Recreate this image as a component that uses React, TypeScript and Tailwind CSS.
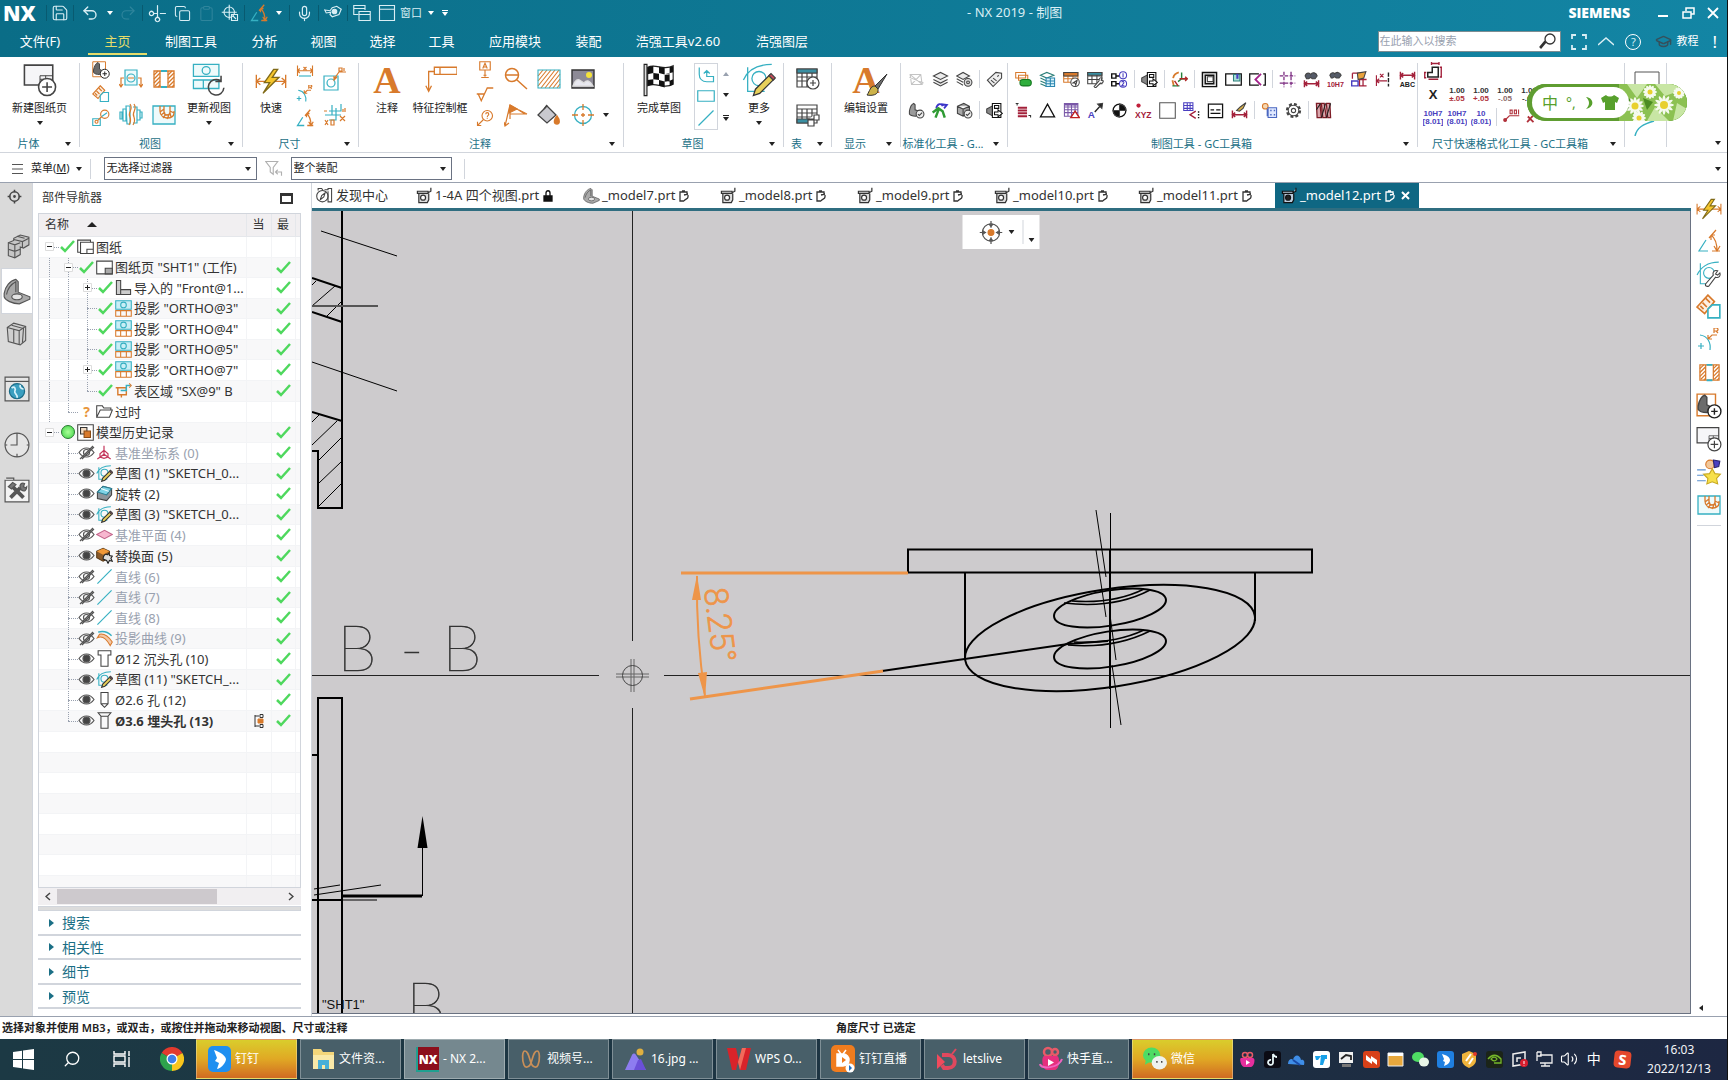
import type { ReactNode } from "react";
import clsx from "clsx";
import {
  Clipboard,
  Copy,
  GraduationCap,
  Mic,
  Save,
  Scissors,
  Search,
  Undo2,
  Redo2,
  Volume2,
} from "lucide-react";

const O = "#d87a2c";
const T = "#36b0c2";
const K = "#444444";
const R = "#a3203a";
const B = "#4a3fc0";

type SvgProps = { size?: number; children: ReactNode; stroke?: string; sw?: number };

function Svg({ size = 24, children, stroke = K, sw = 1.5 }: SvgProps) {
  return (
    <svg width={size} height={size} viewBox="0 0 24 24" fill="none" stroke={stroke} strokeWidth={sw} className="shrink-0">
      {children}
    </svg>
  );
}

function Caret({ className = "text-[#222]" }: { className?: string }) {
  return (
    <svg width="6" height="4" viewBox="0 0 6 4" className={clsx("shrink-0", className)}>
      <path d="M0 0h6L3 4z" fill="currentColor" />
    </svg>
  );
}

/* ---------- shared icons ---------- */

const NewSheet = ({ size = 34 }: { size?: number }) => (
  <Svg size={size} sw={1.1}>
    <path d="M1 1.500h20v14H1z" fill="#f6f6f8" />
    <path d="M12 15v-6h9M12 11.500h9M16 9v3" strokeWidth={0.7} />
    <circle cx="17" cy="17" r="6" fill="#fff" />
    <path d="M17 13.500v7M13.500 17h7" />
  </Svg>
);

const BaseView = ({ size = 18 }: { size?: number }) => (
  <Svg size={size} sw={1.3}>
    <path d="M1 1h17v20H1z" stroke={O} />
    <path d="M2 12C3 7 5 3 8 2l2 2v7l6 3-6 4c-4 0-7-1-8-3z" fill="#6b6b6b" stroke="#444" />
    <circle cx="17" cy="17" r="6" fill="#fff" stroke="#222" />
    <path d="M17 14v6M14 17h6" stroke="#222" />
  </Svg>
);

const EditSection = ({ size = 18 }: { size?: number }) => (
  <Svg size={size}>
    <path d="M11 1 17 7 8 18 1 12z" stroke={O} fill="#fdf0e4" />
    <path d="m9 4 4 4M6 8l4 4M4 11l3 3" stroke={O} />
    <path d="M11 22V14l4-4h7v12z" stroke={T} fill="#fff" />
  </Svg>
);

const DetailView = () => (
  <Svg size={18}>
    <path d="M1 13h10v9H1z" stroke={T} />
    <path d="m8 15 5-5" stroke={O} />
    <circle cx="17" cy="7" r="5.500" stroke={O} />
    <circle cx="6" cy="17" r="2" stroke={O} />
    <path d="m13 10 7-5" stroke={T} />
  </Svg>
);

const SectionLine = () => (
  <Svg sw={1.2}>
    <path d="M6 3h12v15H6z" stroke={T} fill="#eefafb" />
    <circle cx="12" cy="11" r="4" stroke={T} />
    <path d="M2 20v-9h3m14 0h3v9M0 17l2 3 2-3m16 0 2 3 2-3M9 11h6" stroke={O} />
  </Svg>
);

const HalfSection = ({ size = 24 }: { size?: number }) => (
  <Svg size={size} sw={1.3}>
    <path d="M2 4h20v16H2zM8 4v16M16 4v16" stroke={O} />
    <path d="m2 8 4-4M2 12l6-6M2 16l6-6M3 19l5-5M6 20l2-2M16 8l4-4M16 12l6-6M16 16l6-6M17 19l5-5M20 20l2-2" stroke={O} />
    <path d="M9 4h6M9 20h6" stroke={T} strokeWidth={2} />
  </Svg>
);

const BreakView = () => (
  <Svg sw={1.2}>
    <path d="M1 9h2v7H1zM4 6h3v12H4zM7 3h4v18H8zM14 4h4v16h-4M18 7h3v10h-3M21 9h2v6h-2" stroke={T} />
    <path d="M11 1c4 6-3 8 0 13 1 3 1 5-1 8M15 1c4 6-3 8 0 13 1 3 1 5-1 8" stroke={O} />
  </Svg>
);

const BreakOut = ({ size = 24 }: { size?: number }) => (
  <Svg size={size} sw={1.3}>
    <path d="M1 3h22v18H1z" stroke={T} fill="#eefafb" />
    <path d="M8 3v5c0 9 14 9 14 2v-2M12 3v6c0 4 6 4 6 0V3M8 9l4-3M9 12l4-3M11 15l3-4M15 16l2-4M19 14l-1-4M22 10l-4-2" stroke={O} />
  </Svg>
);

const UpdateViews = () => (
  <Svg size={34} sw={0.9}>
    <path d="M1 1h18v8.500H1zM1 12h18v6H1zM8 12v6" stroke={T} fill="#eefafb" />
    <circle cx="10" cy="5.300" r="2.800" stroke={T} />
    <path d="M20 12.500a5.500 5.500 0 1 0 2.500 5M20.500 9v4h-4" strokeWidth={1.1} />
  </Svg>
);

const Rapid = ({ size = 32 }: { size?: number }) => (
  <Svg size={size} sw={1}>
    <path d="M1 8v10M23 8v10M1 13h22M4 10.500 1 13l3 2.500M20 10.500 23 13l-3 2.500" stroke={O} />
    <path d="M14 4 7 14h4L6 22l12-12h-5l4-6z" fill="#f6c62d" stroke="#806a18" />
  </Svg>
);

const LinearDim = () => (
  <Svg size={18} stroke={O}>
    <path d="M2 6v14M22 6v14M2 13h20M5 10l-3 3 3 3M19 10l3 3-3 3M10 8l4 4m0-4-4 4" />
    <path d="M4 20h16" stroke={T} />
  </Svg>
);

const RadialDim = ({ size = 18 }: { size?: number }) => (
  <Svg size={size} sw={size > 20 ? 1.2 : 1.5}>
    <path d="M3 7c8 1 11 8 10 15M4 15v6M1 18h6" stroke={T} />
    <path d="m11 11 4-4h5M11 11V7m0 4h4M17 5V0h3l1 1v1l-1 1h-3m2 0 2 2" stroke={O} />
  </Svg>
);

const AngularDim = ({ size = 18 }: { size?: number }) => (
  <Svg size={size} sw={size > 20 ? 1.2 : 1.7}>
    <path d="M9 11 2 22h9" stroke={T} />
    <path d="M14 6c4 3 6 8 6 16M12 9l7-8M15 22h8M14 6v5M14 6h4M17 17l3 5 3-5" stroke={O} />
  </Svg>
);

const HoleCallout = () => (
  <Svg sw={1.2}>
    <path d="M1 9h14v14H1z" stroke={T} />
    <circle cx="8" cy="16" r="4" stroke={T} />
    <path d="m11 12 5-7h7M14 10l-3 3v-4M16 1h3v3h-3zM21 1v3" stroke={O} />
  </Svg>
);

const Ordinate = () => (
  <Svg sw={1.2}>
    <path d="M6 8h12V1M13 5v12H6M9 2v10M2 12h16" stroke={T} />
    <path d="M20 6v3M22 5v4M17 13l5 5m0-5-5 5M2 17l3 5m0-5-3 5M8 17h3v5H8zM1 8h3" stroke={O} />
  </Svg>
);

const Fcf = () => (
  <Svg size={34} stroke={O} sw={0.9}>
    <path d="M4 20V6h4M8 3h16v5H8zM12 3v5M2 16l2 4 2-4" />
  </Svg>
);

const DatumA = () => (
  <Svg size={18} stroke={O}>
    <path d="M5 1h14v11H5zM12 12v9M7 22h10M10 19h4" />
    <path d="m9 10 3-7 3 7M10 8h4" />
  </Svg>
);
const Surface = () => (
  <Svg size={18} stroke={O} sw={1.7}>
    <path d="M1 12h10M3 12l4 9L15 4h8" />
  </Svg>
);
const Balloon = () => (
  <Svg size={18} stroke={O}>
    <circle cx="15" cy="9" r="7" />
    <path d="m10 14-8 8M2 17v5h5M13 7c0-3 4-3 4 0 0 2-2 1-2 4m0 1v1" />
  </Svg>
);
const Magnify = () => (
  <Svg stroke={O}>
    <circle cx="8" cy="8" r="6.500" />
    <path d="M2 8h12M13 13l10 9" />
  </Svg>
);
const FlagNote = () => (
  <Svg stroke={O} sw={1.2}>
    <path d="M1 23 6 2v14M0 19l1 4 4-3M6 11h15L13 6 6 2" />
    <path d="m6 2 7 4-8 4z" fill={O} />
    <path d="m15 7 8 4" />
  </Svg>
);
const Hatch = () => (
  <Svg stroke={O} sw={1.1}>
    <path d="M1 9 6 3M1 14 10 3M1 19 14 3M4 21 18 3M8 21 22 3M12 21l11-14M16 21l7-9M20 21l3-4" />
    <path d="M1 3h22v18H1z" stroke={T} />
  </Svg>
);
const Picture = () => (
  <Svg sw={1.4}>
    <path d="M1 3h22v18H1z" fill="#8d8a96" stroke="#333" />
    <circle cx="18" cy="8" r="3" fill="#f4e23a" stroke="none" />
    <path d="M2 19c2-6 5-8 8-5l3 2c3-4 6-2 9 3z" fill="#e8e8f0" stroke="#ddd" />
  </Svg>
);
const Fill = () => (
  <Svg sw={1.3}>
    <path d="m10 3 9 9-9 8-9-8z" fill="#c9c9cf" />
    <path d="m7 6 3-4" />
    <path d="M20 13c3 4 3 8 0 8s-4-3 0-8z" fill={O} stroke={O} />
  </Svg>
);
const CenterMark = () => (
  <Svg sw={1.3}>
    <circle cx="12" cy="12" r="8.500" stroke={T} />
    <path d="M12 1v6m0 10v6M1 12h6m10 0h6M12 10v4M10 12h4" stroke={O} />
  </Svg>
);

const Checker = () => (
  <Svg size={34} sw={0.8}>
    <path d="M1.500 1h2v22h-2z" fill="#ddd" stroke="#222" />
    <path d="M4 3c6-3 11 3 18-1v13c-7 4-12-2-18 1z" fill="#fff" stroke="#222" />
    <path d="M4 3l4-1v5l-4 1zM12 2.600l4 1v4.500l-4-1zM8 7l4 .5v4.500L8 11.500zM16 8l6-1.500V2.300L19.500 3v4.500M4 12l4-.6v4L4 16zM12 12l4 1v4.300L12 16zM16 8.500v4.700l3.500-.5V8zM19.500 12.500l2.500-1v3.700l-2.500 1z" fill="#111" stroke="none" />
  </Svg>
);
const Profile = () => (
  <Svg size={18} stroke={T} sw={1.6}>
    <path d="M3 2v9c0 6 4 10 10 10h9v-7h-9V6M9 10l4-4 4 4" />
  </Svg>
);
const RectIcon = () => (
  <Svg size={18} stroke={T} sw={1.6}>
    <path d="M1 5h22v14H1z" />
  </Svg>
);
const LineIcon = ({ size = 18 }: { size?: number }) => (
  <Svg size={size} stroke={T} sw={1.6}>
    <path d="M2 22 22 2" />
  </Svg>
);
const Sketch = ({ size = 34 }: { size?: number }) => (
  <Svg size={size} sw={size > 24 ? 0.9 : 1.5}>
    <path d="M4 3v17h12M1 12C4 5 11 1 21 1" stroke={T} />
    <circle cx="12" cy="11" r="5" stroke={T} />
    <path d="m8 23 1.500-4.500L20 8l3 3-10.500 10.500z" fill="#e8d05a" stroke="#333" />
    <path d="m19 9 3 3 1.500-1.500-3-3z" fill="#c8495a" />
  </Svg>
);
const SketchWrench = () => (
  <Svg size={26} sw={1}>
    <path d="M4 2v19h8M1 13C4 6 11 1 21 1" stroke={T} />
    <circle cx="12" cy="11" r="5" stroke={T} />
    <path d="m9 21 7-8c-1-3 1-5 4-4l-2 3 2 1 2-2c1 3-1 5-4 4l-6 8c-2 1-4 0-3-2z" fill="#fff" stroke="#444" />
  </Svg>
);
const TableNew = ({ edit = false }: { edit?: boolean }) => (
  <Svg sw={1.2}>
    <path d="M1 2h20v18H1zM1 6h20M1 10h20M1 14h20M6 6v14M11 6v14M16 6v14" fill="#fff" />
    {edit ? <path d="M1 16h14v4H1z" fill="#3a8fa2" /> : <path d="M1 2h20v4H1z" fill="#3a8fa2" />}
    {edit ? (
      <path d="M12 16h6v-4h5v5h-5v6h-6zM12 16v7M18 12v5h-6" fill="#fff" />
    ) : (
      <>
        <circle cx="17" cy="16" r="6" fill="#fff" />
        <path d="M17 13v6M14 16h6" />
      </>
    )}
  </Svg>
);

/* ---------- GC toolbox icons, drawn on a 24 grid and shown at 17px ---------- */

const gc = (name: string): ReactNode => {
  switch (name) {
    case "attrOff":
      return <path d="M3 5h15l2 14H5zM3 5l17 14M18 5 5 19M2 9l20 8" stroke="#c4c4c4" />;
    case "layers":
      return <path d="m2 7 10-5 10 5-10 5zM2 12l10 5 10-5M2 16l10 5 10-5" fill="#ececec" />;
    case "layerCfg":
      return (
        <>
          <path d="m1 7 9-5 9 5-9 5zM1 11l9 5M1 15l9 5" fill="#ececec" />
          <circle cx="17" cy="16" r="5.500" fill="#ddd" />
          <circle cx="17" cy="16" r="2" />
        </>
      );
    case "tag":
      return <path d="M2 13 14 2l8 1v7L10 22zM18 6l-2 2M7 13l5 4M10 10l5 4" fill="#eee" />;
    case "partCheck":
      return (
        <>
          <path d="M2 13C3 7 5 3 8 2l2 2v7l9 3-8 6c-4 0-8-1-9-3z" fill="#9a9a9a" />
          <circle cx="17" cy="17" r="5.500" fill="#eee" />
          <path d="m14 17 2 2 4-4" />
        </>
      );
    case "greenCheck":
      return (
        <>
          <path d="M6 9C7 2 14 1 15 6M13 3l8 1-4 5" stroke="#3b35c9" strokeWidth={2.500} />
          <path d="m1 15 8-6 6 4 3 9M10 9 5 22" stroke="#2f9b34" strokeWidth={3.500} />
        </>
      );
    case "boxCheck":
      return (
        <>
          <path d="m2 6 9-4 8 4v10l-9 4-8-4zM2 6l8 4 9-4M10 10v10" fill="#a8a8a8" />
          <circle cx="17" cy="17" r="5.500" fill="#eee" />
          <path d="m14 17 2 2 4-4" />
        </>
      );
    case "export":
      return (
        <>
          <path d="m1 10 9-5v15l-9-5z" fill="#888" />
          <path d="M9 2h12v20H9zM12 5h6v4h-6z" fill="#fff" stroke="#111" />
          <path d="M12 14h5v-3l6 5-6 5v-3h-5z" fill="#fff" stroke="#111" />
        </>
      );
    case "replace":
      return (
        <>
          <path d="M1 2h14v8H1zM5 6h13v7H5z" stroke={O} fill="#fff" />
          <rect x="7" y="12" width="16" height="9" rx="4.500" fill="#2fae3c" stroke="#14771f" />
        </>
      );
    case "layerTable":
      return (
        <>
          <path d="m2 6 9-4 10 4-10 4zM2 10l9 4M2 14l9 4M2 18l9 4" stroke="#2c7f79" />
          <path d="M10 10h12v12H10zM10 14h12M10 18h12M16 10v12" fill="#d9f3fb" stroke="#2a86b0" />
        </>
      );
    case "tableSend":
      return (
        <>
          <path d="M1 2h20v14H1zM1 7h20M1 11h20M7 2v14M14 2v14" stroke={O} />
          <path d="M1 2h20v5H1z" fill={O} stroke={K} />
          <circle cx="17" cy="16" r="6" fill="#fff" />
          <path d="m14 17 6-4-2 7-1-3z" />
        </>
      );
    case "tableWrench":
      return (
        <>
          <path d="M1 2h20v16H1zM1 7h20M1 12h20M7 2v16M14 2v16" />
          <path d="M1 2h20v4H1z" fill="#3a8fa2" />
          <path d="m10 22 7-8c0-4 2-5 4-4l-1 3 3 1c0 3-3 4-4 3l-7 7z" fill="#fff" />
        </>
      );
    case "number":
      return (
        <>
          <path d="M1 4h6v6H1zM1 15h6v6H1zM7 7h5M7 18h5" stroke="#111" strokeWidth={2} />
          <circle cx="17" cy="6" r="5" stroke={B} />
          <circle cx="17" cy="18" r="5" stroke={B} />
          <path d="M17 3v6M15 16c1-2 4-1 3 1l-3 4h4" stroke={B} />
        </>
      );
    case "csys":
      return (
        <>
          <path d="M3 10c1-5 4-7 8-8M2 13l2 8" stroke={O} strokeWidth={2.500} />
          <path d="M15 2v9h8M2 21h10M15 11l-5 4" stroke="#24803a" strokeWidth={2} />
          <path d="M12 11h11M5 14l5 7M20 8l3 3-3 3" stroke="#b02626" strokeWidth={2} />
        </>
      );
    case "frame":
      return (
        <>
          <path d="M2 2h20v20H2zM6 6h12v12H6z" fill="#ececec" stroke="#111" strokeWidth={2} />
          <path d="M9 8h8v7H9z" fill="#fff" />
        </>
      );
    case "frameTag":
      return (
        <>
          <path d="M1 4h22v16H1z" stroke="#111" strokeWidth={1.800} />
          <path d="M12 5h9v9h-9z" fill="#a7dfd8" stroke="#2c7f79" />
          <path d="M16 4h3v7h-3z" fill={B} stroke="none" />
        </>
      );
    case "frameCut":
      return (
        <>
          <path d="M14 4H1v16h13M20 4h3v16h-3" stroke="#111" strokeWidth={1.800} />
          <path d="m17 4-8 8 8 8" stroke="#a3208a" strokeWidth={2.500} />
        </>
      );
    case "grid":
      return <path d="M7 1v22M17 1v22M1 7h22M1 17h22" stroke="#7b2a80" strokeDasharray="5 2" strokeWidth={1.800} />;
    case "findDim":
      return (
        <>
          <path d="M3 7c2-6 7-4 8-2 2-4 8-3 9 2l-3 4h-4l-2-2-3 2H5z" fill="#555b68" />
          <path d="M2 13v10M22 13v10M2 18h20M6 15l-4 3 4 3M18 15l4 3-4 3" stroke={R} strokeWidth={2} />
        </>
      );
    case "findTol":
      return (
        <>
          <path d="M4 6c2-5 6-4 7-2 2-3 7-3 9 2l-3 4h-4l-2-2-3 2H6z" fill="#555b68" />
          <text x="0" y="22" fontSize="10" fontWeight="700" fill={R} stroke="none" fontFamily="Liberation Sans">10H7</text>
        </>
      );
    case "handTable":
      return (
        <>
          <path d="M2 3h18M2 3v8M12 3v18h10M12 12h10M17 6v16" stroke={R} strokeWidth={1.800} />
          <path d="M9 3 21 1l-3 9-8 2z" fill="#e9a23c" />
          <path d="M1 14h9v7H1z" stroke={B} strokeWidth={2} />
        </>
      );
    case "dimCut":
      return (
        <>
          <path d="M2 6v15M2 14h15M6 11l-4 3 4 3M7 4l5 5m0-5L7 9" stroke={R} strokeWidth={1.600} />
          <path d="M19 2v20" stroke="#222" strokeWidth={2} strokeDasharray="6 2" />
        </>
      );
    case "dimAbc":
      return (
        <>
          <path d="M2 1v11M22 1v11M2 6h20M6 3 2 6l4 3M18 3l4 3-4 3" stroke={R} strokeWidth={2} />
          <text x="1" y="23" fontSize="10" fontWeight="700" fill="#222" stroke="none" fontFamily="Liberation Sans">ABC</text>
        </>
      );
    case "redLines":
      return (
        <>
          <path d="M4 8h13M4 12h13M4 16h13M4 20h13" stroke={R} strokeWidth={2.800} />
          <path d="M1 2h4M3 2v3M19 19h3v3" stroke="#333" />
        </>
      );
    case "triangle":
      return <path d="M12 3 22 21H2z" stroke="#111" strokeWidth={1.800} />;
    case "tableTri":
      return (
        <>
          <path d="M2 2h19v18H2zM2 7h19M2 11h19M2 15h19M7 2v18M12 2v18M17 2v18" stroke="#7a58a8" />
          <path d="M2 2h19v3H2z" fill="#7a58a8" stroke="none" />
          <path d="m17 13 6 9H11z" stroke="#c02020" fill="#fff" strokeWidth={2} />
        </>
      );
    case "textArrow":
      return (
        <>
          <text x="1" y="22" fontSize="14" fontWeight="700" fill={B} stroke="none" fontFamily="Liberation Sans">A</text>
          <path d="M11 14 21 3" stroke="#222" strokeWidth={2} />
          <path d="m15 3 7-1-1 7z" fill="#222" />
        </>
      );
    case "cog2":
      return (
        <>
          <circle cx="12" cy="12" r="9" fill="#fff" stroke="#111" strokeWidth={1.800} />
          <path d="M12 3v9h9a9 9 0 0 0-9-9zM12 21v-9H3a9 9 0 0 0 9 9z" fill="#111" />
        </>
      );
    case "xyz":
      return (
        <>
          <circle cx="5" cy="5" r="3" fill="#c01f3a" stroke="none" />
          <text x="0" y="22" fontSize="12" fontWeight="700" fill={R} stroke="none" fontFamily="Liberation Sans">XYZ</text>
        </>
      );
    case "blank":
      return <path d="M1 1h22v22H1z" stroke="#555" fill="#fff" />;
    case "tableSplit":
      return (
        <>
          <path d="M1 1h13v11H1zM1 5h13M1 9h13M6 1v11M10 1v11" stroke={B} />
          <path d="m18 13-8 5 8 5" stroke={R} strokeWidth={2} />
          <path d="M22 13v10" stroke="#111" strokeWidth={2} strokeDasharray="2 2" />
        </>
      );
    case "note":
      return <path d="M2 3h20v19H2zM5 11h5M13 11h6M5 16h14" stroke="#111" strokeWidth={1.800} />;
    case "brushDim":
      return (
        <>
          <path d="m8 12 5-5 8-6-4 8-5 4z" fill="#d9b04a" />
          <path d="M2 12v11M22 12v11M2 18h20M6 15l-4 3 4 3M18 15l4 3-4 3" stroke={R} strokeWidth={2} />
        </>
      );
    case "gearBox":
      return (
        <>
          <circle cx="6" cy="6" r="4" stroke={O} fill="#f6d7b0" />
          <path d="M10 8h12v14H10z" stroke="#4a67c0" fill="#dfe8ff" />
          <path d="M13 12h2M18 12h2M13 18h2M18 18h2M9 10v10" stroke="#4a67c0" strokeWidth={2} />
        </>
      );
    case "gear":
      return (
        <>
          <circle cx="12" cy="12" r="9" strokeDasharray="4 3" strokeWidth={3.500} />
          <circle cx="12" cy="12" r="7.500" fill="#fff" />
          <circle cx="12" cy="12" r="3" />
        </>
      );
    case "spring":
      return (
        <>
          <path d="M2 2h5l2 20H3zM9 2h4l3 20h-5zM16 2h5l1 20h-4z" fill="#d9a6ac" stroke="#7d1c26" strokeWidth={1.800} />
          <path d="m8 2-6 9M15 2l-6 20M22 2l-6 20" stroke="#222" strokeWidth={1.500} />
        </>
      );
    default:
      return null;
  }
};

function GcRow({ names, className }: { names: string[]; className?: string }) {
  return (
    <div className={clsx("flex h-6 items-center", className)}>
      {names.map((n, i) =>
        n === "|" ? (
          <span key={i} className="flex w-1.5 justify-center">
            <span className="h-[18px] w-px bg-gray-300" />
          </span>
        ) : (
          <button key={i} aria-label={n} className="flex w-6 items-center justify-center">
            <Svg size={17}>{gc(n)}</Svg>
          </button>
        ),
      )}
    </div>
  );
}

function TolIcon({ top, bottom, color, bottomColor }: { top: string; bottom?: string; color: string; bottomColor?: string }) {
  return (
    <button className="flex w-6 items-center justify-center" aria-label={top}>
      <svg width="20" height="18" viewBox="0 0 20 18" fontFamily="Liberation Sans" fontWeight="700">
        <text x="10" y={bottom ? 8 : 14} fontSize={bottom ? 8 : 13} fill={color} textAnchor="middle">{top}</text>
        {bottom && <text x="10" y="16" fontSize="8" fill={bottomColor ?? color} textAnchor="middle">{bottom}</text>}
      </svg>
    </button>
  );
}

/* ---------- ribbon ---------- */

function Group({ label, className, caret = true, children }: { label?: string; className: string; caret?: boolean; children?: ReactNode }) {
  return (
    <section className={clsx("flex h-24 shrink-0", className)}>
      <div className="flex min-w-0 flex-1 flex-col">
        <div className="flex h-[79px] items-start">{children}</div>
        <div className="flex h-4 items-center text-[11px] text-[#1b6f86]">
          <span className="flex-1 text-center whitespace-nowrap">{label}</span>
          {caret && (
            <span className="flex w-[22px] shrink-0 justify-center">
              <Caret />
            </span>
          )}
        </div>
      </div>
      <div className="my-1.5 w-px bg-gray-300" />
    </section>
  );
}

function BigButton({ icon, label, className, caret }: { icon: ReactNode; label: string; className: string; caret?: boolean }) {
  return (
    <button className={clsx("flex shrink-0 flex-col items-center pt-1.5", className)}>
      <span className="flex h-[34px] items-center">{icon}</span>
      <span className="mt-0.5 text-[11px] leading-[18px] whitespace-nowrap text-[#222]">{label}</span>
      {caret && <Caret className="mt-1 text-[#222]" />}
    </button>
  );
}

function Stack({ icons, className }: { icons: ReactNode[]; className: string }) {
  const three = icons.length === 3;
  return (
    <div className={clsx("flex shrink-0 flex-col", three ? "pt-px" : "pt-1", className)}>
      {icons.map((icon, i) => (
        <button key={i} className={clsx("flex items-center justify-center", three ? "h-6" : "h-9")} aria-label={`command ${i + 1}`}>
          {icon}
        </button>
      ))}
    </div>
  );
}

const LetterA = ({ brush = false }: { brush?: boolean }) => (
  <span className="relative flex h-[34px] items-center">
    <span className="font-['Liberation_Serif',serif] text-[38px] leading-[34px] font-bold text-[#d87a2c]">A</span>
    {brush && (
      <svg width="24" height="24" viewBox="0 0 24 24" className="absolute -right-2 bottom-0" stroke="#333" strokeWidth="1">
        <path d="M23 1 11 13l3 3z" fill="#6d6d6d" />
        <path d="M11 13c-5 0-5 5-8 9 5 1 12 0 11-6z" fill="#cdb34a" />
      </svg>
    )}
  </span>
);

function Ribbon() {
  return (
    <div className="relative flex h-24 overflow-hidden border-b border-gray-300 bg-white">
      <Group label="片体" className="w-20">
        <BigButton icon={<NewSheet />} label="新建图纸页" className="w-full" caret />
      </Group>
      <Group label="视图" className="w-[163px]">
        <Stack className="ml-2.5 w-[22px]" icons={[<BaseView />, <EditSection />, <DetailView />]} />
        <Stack className="w-[38px]" icons={[<SectionLine />, <BreakView />]} />
        <Stack className="w-7" icons={[<HalfSection />, <BreakOut />]} />
        <BigButton icon={<UpdateViews />} label="更新视图" className="w-[62px]" caret />
      </Group>
      <Group label="尺寸" className="w-[116px]">
        <BigButton icon={<Rapid />} label="快速" className="ml-1 w-12" />
        <Stack className="w-5" icons={[<LinearDim />, <RadialDim />, <AngularDim />]} />
        <Stack className="w-10" icons={[<HoleCallout />, <Ordinate />]} />
      </Group>
      <Group label="注释" className="w-[265px]">
        <BigButton icon={<LetterA />} label="注释" className="ml-2 w-10" />
        <BigButton icon={<Fcf />} label="特征控制框" className="w-[66px]" />
        <Stack className="w-6" icons={[<DatumA />, <Surface />, <Balloon />]} />
        <Stack className="w-[38px]" icons={[<Magnify />, <FlagNote />]} />
        <Stack className="w-7" icons={[<Hatch />, <Fill />]} />
        <Stack className="w-10" icons={[<Picture />, <CenterMark />]} />
        <span className="flex h-[60px] items-end">
          <Caret />
        </span>
      </Group>
      <Group label="草图" className="w-40">
        <BigButton icon={<Checker />} label="完成草图" className="w-[70px]" />
        <div className="mt-1.5 flex h-[67px] w-6 shrink-0 flex-col items-center justify-around border border-gray-300">
          <Profile />
          <RectIcon />
          <LineIcon />
        </div>
        <div className="flex h-[73px] w-4 shrink-0 flex-col items-center justify-around pt-1.5">
          <Caret className="rotate-180 text-gray-400" />
          <Caret />
          <span className="flex flex-col items-center gap-px">
            <span className="h-px w-1.5 bg-[#222]" />
            <Caret />
          </span>
        </div>
        <BigButton icon={<Sketch />} label="更多" className="w-[50px]" caret />
      </Group>
      <Group label="表" className="w-12">
        <Stack className="w-full" icons={[<TableNew />, <TableNew edit />]} />
      </Group>
      <Group label="显示" className="w-[69px]">
        <BigButton icon={<LetterA brush />} label="编辑设置" className="w-full" />
      </Group>
      <Group label="标准化工具 - G..." className="w-[107px]">
        <div className="pt-2.5 pl-[3px]">
          <GcRow names={["attrOff", "layers", "layerCfg", "|", "tag"]} />
          <GcRow className="mt-[7px]" names={["partCheck", "greenCheck", "boxCheck", "|", "export"]} />
        </div>
      </Group>
      <Group label="制图工具 - GC工具箱" className="w-[410px]">
        <div className="pt-2.5 pl-[3px]">
          <GcRow
            names={["replace", "layerTable", "tableSend", "tableWrench", "number", "|", "export", "|", "csys", "|", "frame", "frameTag", "frameCut", "|", "grid", "findDim", "findTol", "handTable", "dimCut", "dimAbc"]}
          />
          <GcRow
            className="mt-[7px]"
            names={["redLines", "triangle", "tableTri", "textArrow", "cog2", "xyz", "blank", "tableSplit", "note", "brushDim", "|", "gearBox", "gear", "|", "spring"]}
          />
        </div>
      </Group>
      <Group label="尺寸快速格式化工具 - GC工具箱" className="w-[207px]">
        <div className="pt-0.5 pl-[3px]">
          <div className="flex h-[23px] items-center">
            <button className="flex w-6 justify-center" aria-label="tolerance frame">
              <Svg size={18}>
                <path d="M11 7v7H5v6h14V7z" stroke="#222" strokeWidth={2} />
                <path d="M10 2h10M10 0v4M20 0v4M1 14v7M0 14h3M0 21h3M23 7v13M21 7h3M21 20h3M6 23h13" stroke={R} strokeWidth={1.800} />
              </Svg>
            </button>
          </div>
          <div className="flex h-[23px] items-center">
            <TolIcon top="X" color="#222" />
            <TolIcon top="1.00" bottom="±.05" color="#333" bottomColor="#b0303a" />
            <TolIcon top="1.00" bottom="+.05" color="#333" bottomColor="#b0303a" />
            <TolIcon top="1.00" bottom="-.05" color="#333" bottomColor="#8c6a6a" />
            <TolIcon top="1.00" bottom="-.05" color="#333" />
          </div>
          <div className="flex h-[23px] items-center">
            <TolIcon top="10H7" bottom="[8.01]" color={B} />
            <TolIcon top="10H7" bottom="(8.01)" color={B} />
            <TolIcon top="10" bottom="(8.01)" color={B} />
            <span className="flex w-1.5 justify-center">
              <span className="h-[18px] w-px bg-gray-300" />
            </span>
            <button className="flex w-6 justify-center" aria-label="leader">
              <Svg size={17} stroke="#b0303a">
                <path d="M2 18 9 11h14M10 3h3v5h-3zM16 3h3v5h-3zM22 2v7" />
                <circle cx="3" cy="17" r="2" fill="#b0303a" />
              </Svg>
            </button>
            <button className="flex w-5 justify-center" aria-label="leader cross">
              <Svg size={17} stroke="#b0303a">
                <path d="m3 20 8-9M4 12l8 8" strokeWidth={2.500} />
              </Svg>
            </button>
          </div>
        </div>
      </Group>
      <Group className="w-[42px]" caret={false}>
        <svg width="40" height="79" viewBox="0 0 40 79" fill="none">
          <path d="M10 30V15h24v15" stroke="#555" />
          <path d="M10 79c2-9 9-12 19-15" stroke={T} strokeWidth="1.500" />
        </svg>
      </Group>
      <div className="flex h-24 flex-1 items-end justify-end pr-1.5 pb-2">
        <Caret />
      </div>
    </div>
  );
}

/* input method bar that floats above the ribbon */
const daisies = [
  [108, 22, 7],
  [137, 21, 8],
  [123, 8, 5],
  [112, 34, 5],
  [152, 9, 4],
];

function ImeBar() {
  return (
    <div className="absolute top-[84px] right-10 h-[37px] w-40 overflow-hidden rounded-full bg-[#63a03a]">
      <svg width="160" height="37" viewBox="0 0 160 37" className="absolute inset-0">
        <rect width="160" height="37" fill="#5f9d31" />
        <path d="M92 0h68v37H92z" fill="#8cc152" />
        <path d="M100 0h20l-10 14zM128 0l10 12L160 4V0zM120 37l8-14 14 14zM146 37l4-18 10 6v12z" fill="#c8e6a4" />
        <path d="M96 12l14 6-10 8zM116 14l10 4-6 8z" fill="#4c8c22" />
        {daisies.map(([x, y, r], i) => (
          <g key={i}>
            {[0, 30, 60, 90, 120, 150].map((a) => (
              <ellipse key={a} cx={x} cy={y} rx={r + 2} ry="2" fill="#f6faee" transform={`rotate(${a} ${x} ${y})`} />
            ))}
            <circle cx={x} cy={y} r={r / 2} fill="#e8d02e" />
          </g>
        ))}
      </svg>
      <div className="absolute top-[3px] left-[5px] flex h-[31px] w-[97px] items-center justify-between rounded-full bg-white px-2.5 text-[#57a02c]">
        <span className="text-[16px] leading-none">中</span>
        <span className="text-[14px] leading-none">°,</span>
        <svg width="9" height="12" viewBox="0 0 9 12">
          <path d="M2 0c8 1 9 10 0 12 4-4 4-8 0-12z" fill="currentColor" />
        </svg>
        <svg width="18" height="15" viewBox="0 0 18 15">
          <path d="M5 0c2 2 6 2 8 0l5 3-2 5-2-1v8H4V7L2 8 0 3z" fill="currentColor" />
        </svg>
      </div>
    </div>
  );
}

/* ---------- header ---------- */

const menuTabs = [
  { label: "文件(F)", width: "w-20" },
  { label: "主页", width: "w-[59px]" },
  { label: "制图工具", width: "w-[88px]" },
  { label: "分析", width: "w-[59px]" },
  { label: "视图", width: "w-[59px]" },
  { label: "选择", width: "w-[59px]" },
  { label: "工具", width: "w-[59px]" },
  { label: "应用模块", width: "w-[88px]" },
  { label: "装配", width: "w-[59px]" },
  { label: "浩强工具v2.60", width: "w-[120px]" },
  { label: "浩强图层", width: "w-[88px]" },
];

const QSep = () => <span className="mx-0.5 h-4 w-px bg-[#085a70]" />;

function Header() {
  return (
    <header className="h-[57px] bg-linear-to-r from-[#0a6d87] to-[#1385a4] text-[#d9eef4]">
      <div className="relative flex h-[26px] items-center">
        <span className="w-11 pl-[3px] font-['Open_Sans',sans-serif] text-[21px] leading-none font-extrabold text-white">NX</span>
        <QSep />
        <div className="flex flex-1 items-center">
          <button aria-label="保存" className="flex w-[22px] justify-center"><Save size={18} strokeWidth={1.500} /></button>
          <QSep />
          <button aria-label="撤消" className="flex w-7 justify-center"><Undo2 size={18} strokeWidth={1.800} /></button>
          <button aria-label="撤消列表" className="flex w-3 justify-center"><Caret className="text-white" /></button>
          <button aria-label="重做" className="flex w-6 justify-center text-[#2f859c]"><Redo2 size={18} strokeWidth={1.500} /></button>
          <QSep />
          <button aria-label="剪切" className="flex w-[25px] justify-center"><Scissors size={17} strokeWidth={1.700} className="-rotate-45" /></button>
          <button aria-label="复制" className="flex w-6 justify-center"><Copy size={17} strokeWidth={1.500} /></button>
          <button aria-label="粘贴" className="flex w-6 justify-center text-[#2f859c]"><Clipboard size={17} strokeWidth={1.500} /></button>
          <button aria-label="变换" className="flex w-6 justify-center">
            <Svg size={18} stroke="currentColor">
              <circle cx="11" cy="11" r="7" />
              <path d="M11 1v20M1 11h20M14 14h8v8h-8zM16 16l4 4" />
            </Svg>
          </button>
          <QSep />
          <button aria-label="角度尺寸" className="flex w-6 justify-center">
            <AngularDim size={18} />
          </button>
          <button aria-label="角度列表" className="flex w-4 justify-center"><Caret className="text-white" /></button>
          <QSep />
          <button aria-label="语音" className="flex w-6 justify-center"><Mic size={17} strokeWidth={1.700} /></button>
          <QSep />
          <button aria-label="触控" className="flex w-6 justify-center">
            <Svg size={18} stroke="currentColor">
              <path d="m1 8 7 1 3-4 6-2 6 4-3 7-9 3-3-3 1-3-6 1z" />
              <circle cx="14" cy="10" r="3" fill="currentColor" />
            </Svg>
          </button>
          <QSep />
          <button aria-label="层叠" className="flex w-6 justify-center">
            <Svg size={18} stroke="currentColor">
              <path d="M7 14H1V2h15v6M1 6h15M8 10h15v12H8zM8 14h15" />
            </Svg>
          </button>
          <button className="ml-1 flex items-center gap-1 text-[11px]">
            <Svg size={18} stroke="currentColor">
              <path d="M2 2h20v20H2zM2 7h20" />
            </Svg>
            窗口
            <Caret className="ml-0.5 text-white" />
          </button>
          <span className="ml-2 flex flex-col items-center gap-px">
            <span className="h-px w-1.5 bg-white" />
            <Caret className="text-white" />
          </span>
        </div>
        <h1 className="absolute left-[56%] text-[13px]">- NX 2019 - 制图</h1>
        <span className="mr-7 font-['Open_Sans',sans-serif] text-[14px] leading-none font-extrabold text-white">SIEMENS</span>
        <div className="flex items-center gap-3 pr-2 text-white">
          <button aria-label="最小化" className="flex h-4 w-3 items-end"><span className="mb-1 h-0.5 w-2.5 bg-white" /></button>
          <button aria-label="还原">
            <svg width="13" height="12" viewBox="0 0 13 12" fill="none" stroke="currentColor" strokeWidth="1.500">
              <path d="M4 4V1h8v6H9M1 5h8v6H1z" />
            </svg>
          </button>
          <button aria-label="关闭">
            <svg width="12" height="12" viewBox="0 0 12 12" stroke="currentColor" strokeWidth="1.800">
              <path d="m1 1 10 10M11 1 1 11" />
            </svg>
          </button>
        </div>
      </div>
      <div className="flex h-[31px] items-stretch">
        <nav className="flex flex-1">
          {menuTabs.map((t, i) => (
            <button
              key={t.label}
              className={clsx("flex flex-col items-center text-[13px] whitespace-nowrap", t.width, i === 0 && "mr-2", i === 1 ? "text-[#e5dc6a]" : "text-white")}
            >
              <span className="flex h-[27px] items-center pt-1">{t.label}</span>
              {i === 1 && <span className="h-0.5 w-full bg-[#e5dc6a]" />}
            </button>
          ))}
        </nav>
        <div className="flex items-center gap-2.5 pr-2.5">
          <label className="flex h-[21px] w-[183px] items-center border border-[#7d8d92] bg-white pr-1">
            <input type="text" aria-label="搜索" placeholder="在此输入以搜索" className="min-w-0 flex-1 text-[11px] text-black outline-none placeholder:text-gray-400" />
            <svg width="17" height="17" viewBox="0 0 17 17" fill="none" stroke="#333" strokeWidth="1.300">
              <circle cx="11" cy="6" r="5" />
              <path d="m7 9-5 6-1-1 5-6" />
            </svg>
          </label>
          <button aria-label="全屏">
            <svg width="16" height="16" viewBox="0 0 16 16" fill="none" stroke="currentColor" strokeWidth="1.800">
              <path d="M1 5V1h4M11 1h4v4M15 11v4h-4M5 15H1v-4" />
            </svg>
          </button>
          <button aria-label="折叠" className="px-px">
            <svg width="16" height="16" viewBox="0 0 16 16" fill="none" stroke="currentColor" strokeWidth="1.500">
              <path d="m0 11 8-7 8 7" />
            </svg>
          </button>
          <button aria-label="帮助" className="flex h-4 w-4 items-center justify-center rounded-full border border-white text-[11px] leading-none">?</button>
          <button className="flex items-center gap-1 pl-1 text-[11px] text-white">
            <GraduationCap size={17} className="text-[#35515c]" />
            教程
          </button>
          <span className="ml-1 text-[17px] leading-none text-white">!</span>
        </div>
      </div>
    </header>
  );
}

function FilterSelect({ value, className }: { value: string; className: string }) {
  return (
    <span className={clsx("relative flex h-[23px] items-center", className)}>
      <select aria-label={value} className="h-full w-full appearance-none border border-gray-500 bg-white pl-0.5 text-[11px] text-[#222]">
        <option>{value}</option>
      </select>
      <span className="pointer-events-none absolute right-1.5">
        <Caret />
      </span>
    </span>
  );
}

function SelectionBar() {
  return (
    <div className="flex h-[30px] items-center border-b border-gray-400 bg-white pt-0.5 pr-1.5 text-[11px] text-[#222]">
      <button className="flex items-center pl-3">
        <svg width="11" height="10" viewBox="0 0 11 10" stroke="#555">
          <path d="M0 .5h11M0 5h11M0 9.500h11" />
        </svg>
        <span className="ml-2">
          菜单(<u>M</u>)
        </span>
        <Caret className="ml-1.5 text-[#222]" />
      </button>
      <span className="ml-2 h-5 w-px bg-gray-300" />
      <FilterSelect value="无选择过滤器" className="ml-[13px] w-[153px]" />
      <span className="flex w-[34px] justify-center">
        <Svg size={18} stroke="#b0b0b0">
          <path d="M1 2h16l-6 8v9l-4-3v-6zM14 16h8v5M17 13l-3 3 3 3" />
        </Svg>
      </span>
      <FilterSelect value="整个装配" className="w-[161px]" />
      <span className="ml-3 h-5 w-px bg-gray-300" />
      <span className="flex-1" />
      <Caret />
    </div>
  );
}

/* ---------- left side ---------- */

const BlocksIcon = () => (
  <Svg size={26} sw={1} stroke="#555">
    <path d="M4 8l5-2V4l6-3 8 2v7l-5 3-3-1v7l-5 3-6-2z" fill="#c6c6c6" />
    <path d="m4 8 6 2 5-2M10 10v12M4 14l6 2 5-2M9 5l8 2 6-3M17 7v6M12 2l7 2" />
  </Svg>
);
const PartIcon = ({ size = 28 }: { size?: number }) => (
  <Svg size={size} sw={1} stroke="#555">
    <path d="M1 14C2 8 6 3 11 2l2 2v9l10 4v2l-9 4C8 23 2 20 1 17z" fill="#a9a9a9" />
    <ellipse cx="12" cy="17" rx="4.500" ry="2.500" fill="#e4e4e4" />
    <path d="M3 15c1-5 4-9 8-11v9" />
  </Svg>
);
const BooksIcon = () => (
  <Svg size={26} sw={1} stroke="#555">
    <path d="m3 6 6-4 11 3v13l-5 4-11-3z" fill="#cfcfcf" />
    <path d="m3 6 11 3v13M7 4l11 3-1 13M9 8v12M14 9l6-4" />
  </Svg>
);
const WebIcon = () => (
  <Svg size={26} sw={1.100} stroke="#555">
    <path d="M1 1h22v22H1z" fill="#e5e5e5" />
    <path d="M1 5h22" />
    <circle cx="12" cy="14" r="7" fill="#3b9fc0" stroke="#1b6b86" />
    <path d="M7 11c3-2 4 1 3 3s3 3 2 6M15 8c-1 3 2 4 3 4" stroke="#d5f1fa" strokeWidth={1.600} />
  </Svg>
);
const ClockIcon = () => (
  <Svg size={26} sw={1.100} stroke="#555">
    <circle cx="12" cy="12" r="11" fill="#e5e5e5" />
    <path d="M12 1v11H6M12 20v3M1 12h2M21 12h2" />
  </Svg>
);
const ToolsIcon = () => (
  <Svg size={26} sw={1.100} stroke="#555">
    <path d="M1 3h8V1H2M1 3h22v20H1z" fill="#f3f3f3" />
    <path d="m6 19 9-9M18 19 7 8" strokeWidth={3.500} />
    <path d="m4 9 4-4 3 2-4 4zM15 10c-1-3 1-5 4-4l-1 3 2 1 1-1c0 3-2 5-5 3z" fill="#777" />
  </Svg>
);
const CogSmall = () => (
  <Svg size={15} sw={2.500}>
    <circle cx="12" cy="12" r="7.500" />
    <circle cx="12" cy="12" r="1" fill={K} />
    <path d="M12 1v4M12 19v4M1 12h4M19 12h4" />
  </Svg>
);

const resourceTabs = [
  { name: "装配导航器", icon: <BlocksIcon />, box: "h-[43px]" },
  { name: "部件导航器", icon: <PartIcon />, box: "h-[46px] border border-r-0 border-gray-300 bg-white" },
  { name: "重用库", icon: <BooksIcon />, box: "mb-3 h-10" },
  { name: "浏览器", icon: <WebIcon />, box: "h-[46px]" },
  { name: "历史记录", icon: <ClockIcon />, box: "h-[66px]" },
  { name: "工具", icon: <ToolsIcon />, box: "h-6" },
];

function ResourceBar() {
  return (
    <aside className="flex w-[33px] shrink-0 flex-col border-r border-gray-300 bg-[#dadada] pl-px">
      <button aria-label="设置" className="flex h-[42px] items-center pb-4 pl-1.5">
        <CogSmall />
      </button>
      {resourceTabs.map((t) => (
        <button key={t.name} aria-label={t.name} className={clsx("flex items-center justify-center", t.box)}>
          {t.icon}
        </button>
      ))}
    </aside>
  );
}

const Check = () => (
  <svg width="15" height="13" viewBox="0 0 15 13" fill="none" stroke="#4fd85e" strokeWidth="2.500">
    <path d="m1 7 4 4L14 1" />
  </svg>
);

const Eye = ({ off = false }: { off?: boolean }) => (
  <svg width="17" height="15" viewBox="0 0 17 15" fill="none" stroke="#555" strokeWidth="1.200">
    <path d="M1 7.500c4-6 11-6 15 0-4 6-11 6-15 0z" />
    {off ? (
      <>
        <circle cx="8.500" cy="7.500" r="3" />
        <path d="M2 14 15 1M4 14 16 2" />
      </>
    ) : (
      <circle cx="8.500" cy="7.500" r="3.500" fill="#444" />
    )}
  </svg>
);

const treeIcons: Record<string, ReactNode> = {
  sheets: <Svg size={17}><path d="M5 20H1V3h18v3M5 6h18v16H5zM14 22v-6h9" /></Svg>,
  sheet: <Svg size={17}><path d="M1 3h22v18H1z" fill="#fff" /><path d="M13 13h10v8H13z" fill="#aaa" /></Svg>,
  import: <Svg size={17}><path d="M2 2h6v13h14v7H2z" fill="#ccc" /><path d="M8 15v6" /></Svg>,
  ortho: (
    <Svg size={17}>
      <path d="M1 1h22v12H1z" fill="#c9eef6" stroke={T} />
      <circle cx="12" cy="7" r="4" stroke={T} />
      <path d="M1 15h22v8H1zM8 15v8M16 15v8" stroke={O} />
    </Svg>
  ),
  region: <Svg size={17}><path d="M4 8h12v10H4zM1 8h3M9 18v4" stroke={O} strokeWidth={2} /><path d="M8 12h8V5h6" stroke={T} strokeWidth={2} /><path d="m20 2 3 3-3 3" stroke={O} /></Svg>,
  folder: <Svg size={17}><path d="M1 20V4h8l2 3h10v3M1 20 6 10h17l-4 10z" fill="#fff" /></Svg>,
  history: <Svg size={17}><path d="M1 1h22v22H1z" fill="#fff" /><path d="M5 5h9v9H5z" fill="#f2dcc4" stroke="#333" /><path d="M10 10h9v9h-9z" fill={O} stroke="#8a4a14" /></Svg>,
  csys: <Svg size={16} stroke="#c4365c"><path d="M12 1v13L2 21M12 14l10 7M12 8l-6 5v5l6 2 6-2v-5z" strokeWidth={1.800} /></Svg>,
  sketch: <Sketch size={17} />,
  revolve: <Svg size={17}><path d="m2 10 8-8 12 3v9l-7 8L2 19z" fill="#8d959b" /><path d="m2 10 8-8 12 3-7 9z" fill="#7fd4e6" stroke="#2a7f94" /><path d="m7 5 11 4" stroke="#fff" /></Svg>,
  plane: <Svg size={17}><path d="m1 12 11-6 11 6-11 6z" fill="#f7b6cf" stroke="#c4668c" /></Svg>,
  replaceFace: <Svg size={17}><path d="m1 6 9-4 9 4v9l-9 5-9-5z" fill="#8a5a2a" stroke="#5a3a18" /><path d="m1 6 9-4 9 4-9 5z" fill="#f09838" stroke="none" /><path d="M10 17c0-5 3-8 6-6l2-2 1 3 4 1-2 3 2 4-4-1-2 4-2-4z" fill="#ddd" stroke="#222" /></Svg>,
  line: <LineIcon size={17} />,
  projCurve: <Svg size={17}><path d="M3 3c7-2 14 0 19 5" stroke={T} strokeWidth={2} /><path d="M2 11c6-3 12 0 18 11l3-5C17 8 10 5 5 6z" fill="#f3c8a8" stroke={O} /></Svg>,
  cbore: <Svg size={17}><path d="M3 1h18v6h-4v16H7V7H3z" /></Svg>,
  hole: <Svg size={17}><path d="M7 2h10v16l-5 5-5-5zM7 18h10" /></Svg>,
  csink: <Svg size={17}><path d="M3 1h18l-4 5v17H7V6zM7 6h10" /></Svg>,
};

type TreeRow = {
  label: string;
  depth: number;
  icon: string;
  lead: "check" | "warn" | "dot" | "eye" | "off";
  box?: "-" | "+";
  tick?: boolean;
  guides?: boolean[];
  bold?: boolean;
  last?: boolean;
};

const rows: TreeRow[] = [
  { label: "图纸", depth: 0, icon: "sheets", lead: "check", box: "-", tick: false },
  { label: '图纸页 "SHT1" (工作)', depth: 1, icon: "sheet", lead: "check", box: "-", guides: [true] },
  { label: '导入的 "Front@1...', depth: 2, icon: "import", lead: "check", box: "+", guides: [true, true] },
  { label: '投影 "ORTHO@3"', depth: 2, icon: "ortho", lead: "check", guides: [true, true] },
  { label: '投影 "ORTHO@4"', depth: 2, icon: "ortho", lead: "check", guides: [true, true] },
  { label: '投影 "ORTHO@5"', depth: 2, icon: "ortho", lead: "check", guides: [true, true] },
  { label: '投影 "ORTHO@7"', depth: 2, icon: "ortho", lead: "check", box: "+", guides: [true, true] },
  { label: '表区域 "SX@9" B', depth: 2, icon: "region", lead: "check", guides: [true, true], last: true },
  { label: "过时", depth: 1, icon: "folder", lead: "warn", tick: false, guides: [true], last: true },
  { label: "模型历史记录", depth: 0, icon: "history", lead: "dot", box: "-" },
  { label: "基准坐标系 (0)", depth: 1, icon: "csys", lead: "off" },
  { label: '草图 (1) "SKETCH_0...', depth: 1, icon: "sketch", lead: "eye" },
  { label: "旋转 (2)", depth: 1, icon: "revolve", lead: "eye" },
  { label: '草图 (3) "SKETCH_0...', depth: 1, icon: "sketch", lead: "eye" },
  { label: "基准平面 (4)", depth: 1, icon: "plane", lead: "off" },
  { label: "替换面 (5)", depth: 1, icon: "replaceFace", lead: "eye" },
  { label: "直线 (6)", depth: 1, icon: "line", lead: "off" },
  { label: "直线 (7)", depth: 1, icon: "line", lead: "off" },
  { label: "直线 (8)", depth: 1, icon: "line", lead: "off" },
  { label: "投影曲线 (9)", depth: 1, icon: "projCurve", lead: "off" },
  { label: "Ø12 沉头孔 (10)", depth: 1, icon: "cbore", lead: "eye" },
  { label: '草图 (11) "SKETCH_...', depth: 1, icon: "sketch", lead: "eye" },
  { label: "Ø2.6 孔 (12)", depth: 1, icon: "hole", lead: "eye" },
  { label: "Ø3.6 埋头孔 (13)", depth: 1, icon: "csink", lead: "eye", bold: true, last: true },
];

function Lead({ kind }: { kind: TreeRow["lead"] }) {
  if (kind === "check") return <Check />;
  if (kind === "warn") return <span className="text-[14px] leading-5 font-bold text-[#e8963c]">?</span>;
  if (kind === "dot") return <span className="h-3.5 w-3.5 rounded-full border border-[#2b7a33] bg-radial from-[#a8ff98] to-[#2ed240]" />;
  return <Eye off={kind === "off"} />;
}

function TreeCell({ row }: { row: TreeRow }) {
  return (
    <div className="flex h-5 items-center overflow-hidden">
      {Array.from({ length: row.depth }, (_, d) => (
        <span key={d} className="relative w-[19px] shrink-0 self-stretch">
          {row.guides?.[d] && <span className="absolute -inset-y-1 left-2.5 border-l border-dotted border-gray-400" />}
        </span>
      ))}
      <span className="relative flex w-5 shrink-0 items-center justify-center self-stretch">
        {row.depth > 0 && <span className={clsx("absolute -top-1 left-2.5 border-l border-dotted border-gray-400", row.last ? "bottom-1/2" : "-bottom-1")} />}
        <span className="absolute top-1/2 right-0 left-2.5 border-t border-dotted border-gray-400" />
        {row.box && (
          <svg width="9" height="9" viewBox="0 0 9 9" className="relative" stroke="#222">
            <path d="M.5.5h8v8h-8z" fill="#fff" stroke="#ddd" />
            <path d={row.box === "+" ? "M2 4.500h5M4.500 2v5" : "M2 4.500h5"} />
          </svg>
        )}
      </span>
      <span className="flex w-[17px] shrink-0 justify-center">
        <Lead kind={row.lead} />
      </span>
      <span className="flex w-[18px] shrink-0 justify-center">{treeIcons[row.icon]}</span>
      <span className={clsx("ml-0.5 text-[13px] leading-5 whitespace-nowrap", row.lead === "off" ? "text-gray-400" : "text-[#333]", row.bold && "font-bold")}>{row.label}</span>
    </div>
  );
}

const sections = ["搜索", "相关性", "细节", "预览"];

function Navigator() {
  return (
    <section className="flex w-[279px] shrink-0 flex-col border-r border-gray-300 bg-white pr-2.5 pl-[5px]">
      <div className="flex h-[30px] items-center justify-between pr-2 pl-1 text-[12px] text-[#333]">
        部件导航器
        <button aria-label="最大化" className="h-[11px] w-[13px] border-2 border-t-[3px] border-[#333]" />
      </div>
      <div className="h-[675px] overflow-hidden border border-gray-300">
        <table className="w-full table-fixed border-collapse text-[12px] text-[#333]">
          <colgroup>
            <col />
            <col className="w-[25px]" />
            <col className="w-6" />
            <col className="w-[5px]" />
          </colgroup>
          <thead>
            <tr className="h-[22px] bg-[#f1eff1]">
              <th className="border-r border-b border-gray-200 pl-1.5 text-left font-normal">
                <span className="flex items-center gap-[18px]">
                  名称
                  <svg width="10" height="5" viewBox="0 0 10 5"><path d="M0 5h10L5 0z" fill="#222" /></svg>
                </span>
              </th>
              <th className="border-r border-b border-gray-200 p-0 font-normal">当</th>
              <th className="border-r border-b border-gray-200 p-0 font-normal">最</th>
              <th className="border-b border-gray-200 p-0" />
            </tr>
          </thead>
          <tbody>
            {Array.from({ length: 32 }, (_, i) => {
              const row = rows[i];
              return (
                <tr key={i} className={clsx("even:bg-[#f8f8f9]", i % 2 === 0 || i % 8 === 7 ? "h-[21px]" : "h-5")}>
                  <td className="border-r border-b border-gray-100 p-0">
                    <div className="-my-1">{row && <TreeCell row={row} />}</div>
                  </td>
                  <td className="border-r border-b border-gray-100 p-0">
                    {row?.bold && (
                      <span className="flex justify-center">
                        <svg width="10" height="14" viewBox="0 0 10 14" fill="none" stroke="#333">
                          <path d="M1 1v12M1 2h4M1 12h4M6 .5h3v3H6zM6 10.500h3v3H6z" />
                          <path d="M4 5h5v4H4z" stroke={O} fill={O} />
                        </svg>
                      </span>
                    )}
                  </td>
                  <td className="border-r border-b border-gray-100 p-0">
                    {row && row.tick !== false && (
                      <span className="flex justify-center">
                        <Check />
                      </span>
                    )}
                  </td>
                  <td className="border-b border-gray-100 p-0" />
                </tr>
              );
            })}
          </tbody>
        </table>
      </div>
      <div className="flex h-[17px] items-center bg-[#f1eff1] px-[7px]">
        <svg width="6" height="9" viewBox="0 0 6 9" fill="none" stroke="#444" strokeWidth="1.500"><path d="M5 1 1 4.500 5 8" /></svg>
        <span className="ml-1.5 h-[15px] w-40 bg-[#cdc9cd]" />
        <svg width="6" height="9" viewBox="0 0 6 9" fill="none" stroke="#444" strokeWidth="1.500" className="ml-auto"><path d="m1 1 4 3.500L1 8" /></svg>
      </div>
      <div className="mt-px h-[5px] border border-gray-300 bg-[#dcdcdc]" />
      {sections.map((s) => (
        <button key={s} className="flex h-[25px] shrink-0 items-center border-b-2 border-gray-300 pl-[11px] text-[14px] text-[#1b6f86] even:h-6">
          <svg width="5" height="8" viewBox="0 0 5 8" className="mr-2"><path d="M0 0v8l5-4z" fill="currentColor" /></svg>
          {s}
        </button>
      ))}
    </section>
  );
}

/* ---------- document tabs ---------- */

const PrtIcon = ({ active = false }: { active?: boolean }) => (
  <Svg size={17} sw={1.700} stroke={active ? "#111" : "#333"}>
    <path d="M2 6h15v3H2zM4 9v13h12l2-4V9M17 8l4-2V1" fill={active ? "#bcd" : "#ddd"} />
    <circle cx="10" cy="15" r="3.500" fill={active ? "#222" : "#fff"} />
  </Svg>
);
const DiscoverIcon = () => (
  <Svg size={17} sw={1.500}>
    <circle cx="9" cy="13" r="8" />
    <path d="m13 8-2 6-5 4 2-6zM3 5V2h5l2 3M12 4h5V2h5v19h-5V6" />
  </Svg>
);
const Modified = () => (
  <svg width="10" height="12" viewBox="0 0 10 12" fill="none" stroke="currentColor" strokeWidth="1.300">
    <path d="M5 11H1V2h7v2M3 1h3M9 5v2c0 2-3 2-4 4M5 5l4-1" />
  </svg>
);
const LockIcon = () => (
  <svg width="10" height="12" viewBox="0 0 10 12" fill="none" stroke="#111" strokeWidth="1.300">
    <path d="M3 6V3c0-3 4-3 4 0v3" />
    <path d="M1 6h8v5H1z" fill="#111" />
  </svg>
);

const docTabs = [
  { name: "1-4A 四个视图.prt", width: "w-[167px]", locked: true },
  { name: "_model7.prt", width: "w-[137px]", part: true },
  { name: "_model8.prt", width: "w-[137px]" },
  { name: "_model9.prt", width: "w-[137px]" },
  { name: "_model10.prt", width: "w-[144px]" },
  { name: "_model11.prt", width: "w-[143px]" },
  { name: "_model12.prt", width: "w-36", active: true },
];

function DocTabs() {
  return (
    <div className="flex h-7 shrink-0 border-b-[3px] border-[#2f6d80] bg-white text-[13px] text-[#333]">
      <button className="flex w-[98px] items-center gap-[3px] pl-1 whitespace-nowrap">
        <DiscoverIcon />
        发现中心
      </button>
      {docTabs.map((t) => (
        <button key={t.name} className={clsx("flex items-center gap-0.5 pl-1.5 whitespace-nowrap", t.width, t.active && "bg-[#0f6783] text-white")}>
          {t.part ? <PartIcon size={17} /> : <PrtIcon active={t.active} />}
          {t.name}
          <span className="ml-0.5">{t.locked ? <LockIcon /> : <Modified />}</span>
          {t.active && (
            <svg width="9" height="9" viewBox="0 0 9 9" stroke="#fff" strokeWidth="2" className="ml-1">
              <path d="m1 1 7 7M8 1 1 8" />
            </svg>
          )}
        </button>
      ))}
    </div>
  );
}

/* ---------- drawing ---------- */

function Drawing() {
  return (
    <svg className="absolute inset-0 h-full w-full" fill="none" stroke="#000">
      <g transform="translate(-312 -211)">
        {/* section B-B, cut off by the left edge */}
        <g strokeWidth="2">
          <path d="M342 211V508H318V451H312M312 278l30 10M312 312l30 10M312 412l30 9" />
          <path d="M318 1020V698H342V1020M312 755h6M312 900h30" />
        </g>
        <path d="m321 231 76 25M312 362l85 29M312 285l4-4M312 306l23-20M327 316l14-14M312 422l7-7M312 445l25-24M319 460l22-22M319 483l22-21M319 506l22-22M314 895l67-10M314 889l26-4M342 900h35" />
        <path d="M312 306h66" stroke="#555" strokeWidth="2" />
        <path d="M342 896h80" strokeWidth="3" />
        <path d="M422.500 896v-60" />
        <path d="m422.500 816-5 32h10z" fill="#000" stroke="none" />

        {/* cursor */}
        <path d="M632.500 211v430M632.500 708v312M312 675.500h287M664 675.500h1200" stroke="#222" />
        <path d="M631 659v33M634 659v33M616 674h33M616 677h33" stroke="#666" />
        <circle cx="632.500" cy="675.500" r="10" stroke="#444" />

        {/* flange view */}
        <path d="M908 549.500h404v23H908zM965 573v86M1255 573v48" strokeWidth="2" />
        <g strokeWidth="2">
          <ellipse cx="1110" cy="638" rx="146.500" ry="48.700" transform="rotate(-8.700 1110 638)" />
          <ellipse cx="1110" cy="608" rx="56.600" ry="17.600" transform="rotate(-9 1110 608)" />
          <ellipse cx="1110" cy="649" rx="56.600" ry="17.600" transform="rotate(-9 1110 649)" />
          <path d="M1064 603q50 6 86-13M1072 601q42 3 72-12M1068 645q46 4 82-14M1074 642q40 2 70-12" strokeWidth="1.500" />
          <path d="M882 671l186-27 40-3" />
          <path d="M1110 549v140" />
        </g>
        <path d="M1110.500 513v215M1096 510l10 67M1096 550l10 67M1110 615l6 45M1112 665l9 60" />

        {/* selected angular dimension */}
        <g stroke="#ee9549" strokeWidth="3">
          <path d="M681 573h227M690 699l193-28" />
          <path d="M697 576q-1 60 8 120" strokeWidth="2" />
          <path d="m697 575-5 25h9zM705 698l-7-25 9-1z" fill="#ee9549" stroke="none" />
        </g>
        <text transform="translate(704 589) rotate(83)" fontSize="33" fill="#ee9549" stroke="#ee9549" strokeWidth="0.700" className="font-['Roboto',sans-serif] font-light">
          8.25°
        </text>

        <g stroke="#333" strokeWidth="0.600" fill="#333" fontSize="64" className="font-['Lato',sans-serif] font-thin">
          <text x="337" y="671">B</text>
          <text x="400" y="671">-</text>
          <text x="442" y="671">B</text>
          <text x="406" y="1028">B</text>
        </g>
        <text x="322" y="1009" fontSize="13" fill="#111" stroke="none" className="font-['Liberation_Sans',sans-serif]">
          "SHT1"
        </text>
      </g>
    </svg>
  );
}

function Canvas() {
  return (
    <div className="relative mb-0.5 flex-1 overflow-hidden border-r border-b border-gray-500 bg-[#cdcbcd]">
      <Drawing />
      <div className="absolute top-1 left-1/2 flex h-[34px] w-[77px] -translate-x-1/2 items-center bg-white">
        <button aria-label="定向视图" className="flex flex-1 items-center justify-center gap-1.5 pl-2">
          <Svg size={23} sw={1.300} stroke="#555">
            <circle cx="12" cy="12" r="9" />
            <circle cx="12" cy="12" r="3" fill={O} stroke={O} />
            <path d="M12 0v7m0 10v7M0 12h7m10 0h7M10 3l2 3 2-3M10 21l2-3 2 3M3 10l3 2-3 2M21 10l-3 2 3 2" />
          </Svg>
          <Caret />
        </button>
        <span className="h-6 w-px bg-gray-300" />
        <button aria-label="更多选项" className="flex w-4 justify-center pt-4">
          <Caret />
        </button>
      </div>
    </div>
  );
}

const Star = () => (
  <Svg size={26} sw={1}>
    <path d="m15 9 2.500 4.500 5 .5-3.500 4 1 5-5-2-5 2 1-5-4-4 5.500-.5z" fill="#f7e04a" stroke="#c7a820" />
    <circle cx="13" cy="5" r="4" fill="#f1c79a" stroke={O} />
    <path d="m16 1 6 1-1 5-4 1z" fill={B} stroke="#2a2470" />
    <path d="M1 10h8M1 15h6M1 20h8" stroke="#5a90d0" />
  </Svg>
);

const sideTools = [
  { name: "快速尺寸", icon: <Rapid size={26} /> },
  { name: "角度尺寸", icon: <AngularDim size={24} /> },
  { name: "编辑草图", icon: <SketchWrench /> },
  { name: "编辑剖面", icon: <EditSection size={26} /> },
  { name: "径向尺寸", icon: <RadialDim size={24} /> },
  { name: "半剖", icon: <HalfSection size={23} /> },
  { name: "基本视图", icon: <BaseView size={26} /> },
  { name: "新建图纸页", icon: <NewSheet size={26} /> },
  { name: "收藏", icon: <Star /> },
  { name: "局部剖", icon: <BreakOut size={24} /> },
];

function SideTools() {
  return (
    <aside className="flex w-9 shrink-0 flex-col items-center bg-white pt-2">
      {sideTools.map((t) => (
        <button key={t.name} aria-label={t.name} className="flex h-[33px] items-center">
          {t.icon}
        </button>
      ))}
      <span className="mt-1 h-px w-6 bg-gray-300" />
      <span className="mt-auto mb-1.5 mr-4">
        <Caret className="rotate-90 text-[#222]" />
      </span>
    </aside>
  );
}

/* ---------- taskbar ---------- */

const taskIcons: Record<string, ReactNode> = {
  ding: (
    <svg width="23" height="26" viewBox="0 0 23 26">
      <rect width="23" height="26" rx="5" fill="#1f8ff0" />
      <path d="M6 4c6 2 11 5 12 9 0 3-4 9-9 10l2-6-4-2 2-3z" fill="#fff" />
    </svg>
  ),
  explorer: (
    <svg width="23" height="22" viewBox="0 0 23 22">
      <path d="M1 1h8l2 3h11v17H1z" fill="#f3d67a" />
      <path d="M1 7h21v14H1z" fill="#f9e9a8" />
      <path d="M6 12h11v9h-4v-4h-3v4H6z" fill="#48b0d8" />
    </svg>
  ),
  nx: (
    <span className="flex h-[25px] w-[23px] items-end justify-center border-b-2 border-l-2 border-[#20a090] bg-[#8c0f1c] pb-1 font-['Open_Sans',sans-serif] text-[12px] leading-none font-extrabold text-white">
      NX
    </span>
  ),
  channels: (
    <svg width="20" height="20" viewBox="0 0 20 20" fill="none" stroke="#c98f58" strokeWidth="1.700">
      <path d="M10 14C8 19 4 19 3 16 1 11 1 2 4 2c3 0 4 6 6 12 2-6 3-12 6-12 3 0 3 9 1 14-1 3-5 3-7-2z" />
    </svg>
  ),
  photo: (
    <svg width="23" height="23" viewBox="0 0 23 23">
      <path d="M1 22 8 7c1-2 3-2 4 0l10 15z" fill="#8d7cf0" />
      <path d="m10 22 4-10 3-1 5 11z" fill="#6b50d8" />
      <circle cx="16" cy="4" r="3.500" fill="#e0b040" />
    </svg>
  ),
  wps: (
    <svg width="24" height="24" viewBox="0 0 24 24">
      <path d="M0 1h9l3 13 3-13h9l-5 22h-6l-2-8-2 8H5z" fill="#d8232a" />
      <path d="M11 15 15 1h4l-6 22z" fill="#f26a5a" />
    </svg>
  ),
  dlive: (
    <svg width="24" height="28" viewBox="0 0 24 28">
      <rect width="24" height="27" rx="5" fill="#f07c1e" />
      <path d="M6 9h6c8 0 8 12 0 12H6zM7 5l3 4M15 5l-3 4" fill="#fff" stroke="#fff" strokeWidth="1.500" />
      <path d="m11 12 4 3-4 3z" fill="#f07c1e" />
      <circle cx="19" cy="23" r="4.500" fill="#fff" />
      <path d="m18 20 3 3-3 3z" fill="#1f6fc0" />
    </svg>
  ),
  lets: (
    <svg width="22" height="24" viewBox="0 0 22 24" fill="none">
      <path d="M1 7v15l8-7z" fill="#f04a5c" />
      <path d="M6 8h6c9 0 9 13 0 13H8l-2-3" stroke="#e0485e" strokeWidth="4" />
      <path d="m16 7 4-5" stroke="#e0485e" strokeWidth="2" />
    </svg>
  ),
  kuai: (
    <svg width="24" height="26" viewBox="0 0 24 26">
      <circle cx="9" cy="6" r="4" fill="none" stroke="#e85a68" strokeWidth="2.500" />
      <circle cx="16" cy="6" r="3" fill="none" stroke="#e85a68" strokeWidth="2.500" />
      <path d="M5 10h13c3 0 3 13-2 14H8c-5 0-6-13-3-14z" fill="#e62f7e" />
      <path d="M9 13v7l6-3.500z" fill="#fff" />
      <path d="M1 18c1 6 19 4 22-5" fill="none" stroke="#f064c0" strokeWidth="2" />
    </svg>
  ),
  wechat: (
    <svg width="25" height="26" viewBox="0 0 25 26">
      <ellipse cx="9" cy="9" rx="9" ry="8" fill="#4edc64" />
      <path d="m3 14-1 5 5-3z" fill="#4edc64" />
      <ellipse cx="17" cy="17" rx="8" ry="7" fill="#eef2ee" />
      <path d="M6 7v2M12 7v2M14.500 15v2M19.500 15v2" stroke="#444" strokeWidth="1.500" />
    </svg>
  ),
};

const tasks = [
  { icon: "ding", label: "钉钉", tone: "bg-linear-to-b from-[#d9cd2c] via-[#e0a824] to-[#cf6a22]" },
  { icon: "explorer", label: "文件资..." },
  { icon: "nx", label: "- NX 2...", tone: "bg-[#75888f]" },
  { icon: "channels", label: "视频号..." },
  { icon: "photo", label: "16.jpg ..." },
  { icon: "wps", label: "WPS O..." },
  { icon: "dlive", label: "钉钉直播" },
  { icon: "lets", label: "letslive" },
  { icon: "kuai", label: "快手直..." },
  { icon: "wechat", label: "微信", tone: "bg-linear-to-b from-[#d9cd2c] via-[#e0a824] to-[#cf6a22]" },
];

const Tray16 = ({ bg, children }: { bg?: string; children: ReactNode }) => (
  <svg width="17" height="17" viewBox="0 0 17 17" fill="none">
    {bg && <rect width="17" height="17" rx="3" fill={bg} />}
    {children}
  </svg>
);

const tray: ReactNode[] = [
  <Tray16><path d="M2 7h12c3 0 1 9-2 9H5c-3 0-5-9-3-9z" fill="#e62f9e" /><circle cx="6" cy="4" r="2.500" stroke="#e85a68" strokeWidth="1.500" /><circle cx="11" cy="4" r="2.500" stroke="#e85a68" strokeWidth="1.500" /><path d="M7 9v5l4-2.500z" fill="#fff" /></Tray16>,
  <Tray16 bg="#0b0b14"><path d="M9 3v8a2.500 2.500 0 1 1-2-2M9 3c1 2 2 3 4 3" stroke="#e8f6f8" strokeWidth="1.800" /></Tray16>,
  <Tray16><path d="M0 13c0-5 4-6 5-4 1-6 7-6 8 0 3-1 4 2 3 5z" fill="#3f8ee8" /><path d="m5 9 7 5" stroke="#1a4aa8" strokeWidth="2" /></Tray16>,
  <Tray16 bg="#fff"><path d="M2 5h6L5 9H3zM8 4h6v4h-2l-2 6H7z" fill="#18a0e8" /></Tray16>,
  <Tray16><path d="M1 1h14v11H1z" fill="#f0f0f0" /><path d="m3 8 5-4 5 1v4" stroke="#222" strokeWidth="1.800" /><path d="M4 13h9v3H4z" fill="#777" /></Tray16>,
  <Tray16 bg="#d84018"><path d="m3 4 5 4V5l6 4v5l-5-4v3L3 9z" fill="#fff" /></Tray16>,
  <Tray16><path d="M1 2h15v13H1z" fill="#e8a83c" stroke="#eee" /><path d="M1 2h15v3H1z" fill="#fff" /></Tray16>,
  <Tray16><ellipse cx="6" cy="6" rx="6" ry="5" fill="#4edc64" /><ellipse cx="12" cy="11" rx="5" ry="4.500" fill="#e8f6e8" /></Tray16>,
  <Tray16 bg="#1f7fe0"><path d="M5 3c4 1 8 3 8 6s-3 5-6 6l1-4-2-1 1-2z" fill="#fff" /></Tray16>,
  <Tray16><path d="m8 0 7 3v6c0 4-3 6-7 8-4-2-7-4-7-8V3z" fill="#f0b43c" /><path d="m5 10 5-7M8 13l4-6" stroke="#fff" strokeWidth="2" /><circle cx="14" cy="3" r="2" fill="#e03a2a" /></Tray16>,
  <Tray16 bg="#1b2418"><path d="M2 8c4-5 9-5 13 0v4H8M5 8c2-3 5-2 6 0-2 3-4 2-6 0z" stroke="#76b82a" strokeWidth="1.300" /></Tray16>,
  <Tray16><path d="M2 3 14 1v12L2 15z" stroke="#eee" strokeWidth="1.500" /><path d="M6 11V7h4" stroke="#eee" strokeWidth="1.500" /><circle cx="13" cy="12" r="4" fill="#d81e2e" /><path d="M13 10v3m0 1v.5" stroke="#fff" /></Tray16>,
  <Tray16><path d="M4 4h12v8H4M9 12v3M5 15h9M1 1v9M1 1h4v4H1" stroke="#eee" strokeWidth="1.300" /></Tray16>,
  <Volume2 size={18} strokeWidth={1.500} />,
  <span className="text-[14px] leading-none">中</span>,
];

function Taskbar() {
  return (
    <footer className="flex h-[41px] shrink-0 items-center bg-linear-to-r from-[#1c3944] via-[#1d3442] to-[#1d2742] pb-px text-[12px] text-white">
      <button aria-label="开始" className="flex w-[47px] shrink-0 justify-center">
        <svg width="21" height="21" viewBox="0 0 21 21" fill="#fff">
          <path d="M0 3 9 1.700V10H0zM10 1.500 21 0v10H10zM0 11h9v8.300L0 18zM10 11h11v10l-11-1.500z" />
        </svg>
      </button>
      <button aria-label="搜索任务栏" className="flex w-[50px] shrink-0 justify-center">
        <Search size={18} strokeWidth={1.700} className="-scale-x-100" />
      </button>
      <button aria-label="任务视图" className="flex w-[50px] shrink-0 justify-center">
        <svg width="18" height="16" viewBox="0 0 18 16" fill="none" stroke="#fff" strokeWidth="1.400">
          <path d="M1 0v3h11V0M1 16v-3h11v3M1 5h11v6H1zM16 0v3M16 6v10M15 4h2" />
        </svg>
      </button>
      <button aria-label="Chrome" className="flex w-[49px] shrink-0 justify-center">
        <svg width="24" height="24" viewBox="0 0 24 24">
          <path d="M12 12 1.600 6a12 12 0 0 1 20.800 0z" fill="#e23a2e" />
          <path d="M12 12 22.400 6A12 12 0 0 1 12 24z" fill="#f8c51c" />
          <path d="M12 12 12 24A12 12 0 0 1 1.600 6z" fill="#2ea24c" />
          <circle cx="12" cy="12" r="5.500" fill="#fff" />
          <circle cx="12" cy="12" r="4.300" fill="#3f7fe8" />
        </svg>
      </button>
      <div className="flex h-full shrink-0 gap-[3px]">
        {tasks.map((t) => (
          <button key={t.label} className={clsx("flex w-[101px] items-center gap-1 border border-white/30 pl-2.5 whitespace-nowrap", t.tone ?? "bg-[#485f69]")}>
            <span className="flex w-6 justify-center">{taskIcons[t.icon]}</span>
            {t.label}
          </button>
        ))}
      </div>
      <div className="flex min-w-0 flex-1 items-center pl-0.5">
        {tray.map((icon, i) => (
          <span key={i} className="flex flex-1 justify-center">
            {icon}
          </span>
        ))}
      </div>
      <span className="mx-2 flex h-[17px] w-[17px] shrink-0 rotate-6 items-center justify-center rounded-sm bg-[#e5482c] text-[14px] leading-none font-extrabold">S</span>
      <div className="w-20 shrink-0 text-center leading-[19px] text-gray-100">
        16:03
        <br />
        2022/12/13
      </div>
      <span className="w-2 shrink-0" />
    </footer>
  );
}

export default function App() {
  return (
    <div className="relative flex h-screen flex-col overflow-hidden border-r border-[#111] bg-white font-['Noto_Sans','Noto_Sans_CJK_SC',sans-serif]">
      <Header />
      <Ribbon />
      <SelectionBar />
      <ImeBar />
      <main className="flex min-h-0 flex-1">
        <ResourceBar />
        <Navigator />
        <div className="flex min-w-0 flex-1 flex-col">
          <DocTabs />
          <Canvas />
        </div>
        <SideTools />
      </main>
      <div className="relative flex h-[23px] shrink-0 items-center border-t border-gray-400 pl-0.5 text-[11px] font-semibold text-[#222]">
        选择对象并使用 MB3，或双击，或按住并拖动来移动视图、尺寸或注释
        <span className="absolute left-[836px]">角度尺寸 已选定</span>
      </div>
      <Taskbar />
    </div>
  );
}
